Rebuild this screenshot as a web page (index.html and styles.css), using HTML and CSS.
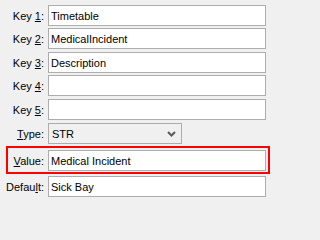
FILE: index.html
```html
<!DOCTYPE html>
<html>
<head>
<meta charset="utf-8">
<link rel="stylesheet" href="styles.css">
</head>
<body>
<form class="form">
  <div class="row">
    <label class="lbl">Key <u>1</u>:</label>
    <input class="field" type="text" value="Timetable">
  </div>
  <div class="row">
    <label class="lbl">Key <u>2</u>:</label>
    <input class="field" type="text" value="MedicalIncident">
  </div>
  <div class="row row-shift">
    <label class="lbl">Key <u>3</u>:</label>
    <input class="field" type="text" value="Description">
  </div>
  <div class="row">
    <label class="lbl">Key <u>4</u>:</label>
    <input class="field" type="text" value="">
  </div>
  <div class="row row-shift">
    <label class="lbl">Key <u>5</u>:</label>
    <input class="field" type="text" value="">
  </div>
  <div class="row row-shift">
    <label class="lbl"><u>T</u>ype:</label>
    <div class="combo">
      <span class="combo-text">STR</span>
      <svg class="chev" width="9" height="6" viewBox="0 0 9 6"><path d="M1 1 L4.5 4.5 L8 1" fill="none" stroke="#5a5a5a" stroke-width="2"/></svg>
    </div>
  </div>
  <div class="highlight">
    <div class="row row-inner">
      <label class="lbl lbl-inner"><u>V</u>alue:</label>
      <input class="field" type="text" value="Medical Incident">
    </div>
  </div>
  <div class="row">
    <label class="lbl">Defau<u>l</u>t:</label>
    <input class="field" type="text" value="Sick Bay">
  </div>
</form>
</body>
</html>
```

FILE: styles.css
```css
html, body {
  margin: 0;
  padding: 0;
  background: #f0f0f0;
}
body {
  width: 271px;
  height: 202px;
  overflow: hidden;
  font-family: "Liberation Sans", Arial, sans-serif;
  font-size: 11px;
  color: #000;
}
.form {
  display: flex;
  flex-direction: column;
  padding-top: 5px;
}
.row {
  display: flex;
  align-items: center;
  height: 21px;
  margin-bottom: 2px;
}
.row-shift {
  margin-top: 1px;
}
.lbl {
  width: 44px;
  box-sizing: border-box;
  text-align: right;
  margin-right: 4px;
  white-space: nowrap;
}
.lbl u {
  text-underline-offset: 1px;
}
.field {
  box-sizing: border-box;
  width: 218px;
  height: 21px;
  margin: 0;
  padding: 0 2px;
  border: 1px solid #adadad;
  background: #fff;
  font-family: "Liberation Sans", Arial, sans-serif;
  font-size: 11px;
  color: #000;
  outline: none;
}
.combo {
  box-sizing: border-box;
  width: 134px;
  height: 21px;
  border: 1px solid #adadad;
  background: #f0f0f0;
  display: flex;
  align-items: center;
  justify-content: space-between;
  padding: 0 5px 0 3px;
}
.chev {
  display: block;
  margin-top: 1px;
}
.highlight {
  margin: 0 0 2px 6px;
  width: 264px;
  height: 28px;
  box-sizing: border-box;
  border: 2px solid #ff0000;
  padding-top: 2px;
}
.row-inner {
  margin: 0;
}
.lbl-inner {
  width: 36px;
}
```
